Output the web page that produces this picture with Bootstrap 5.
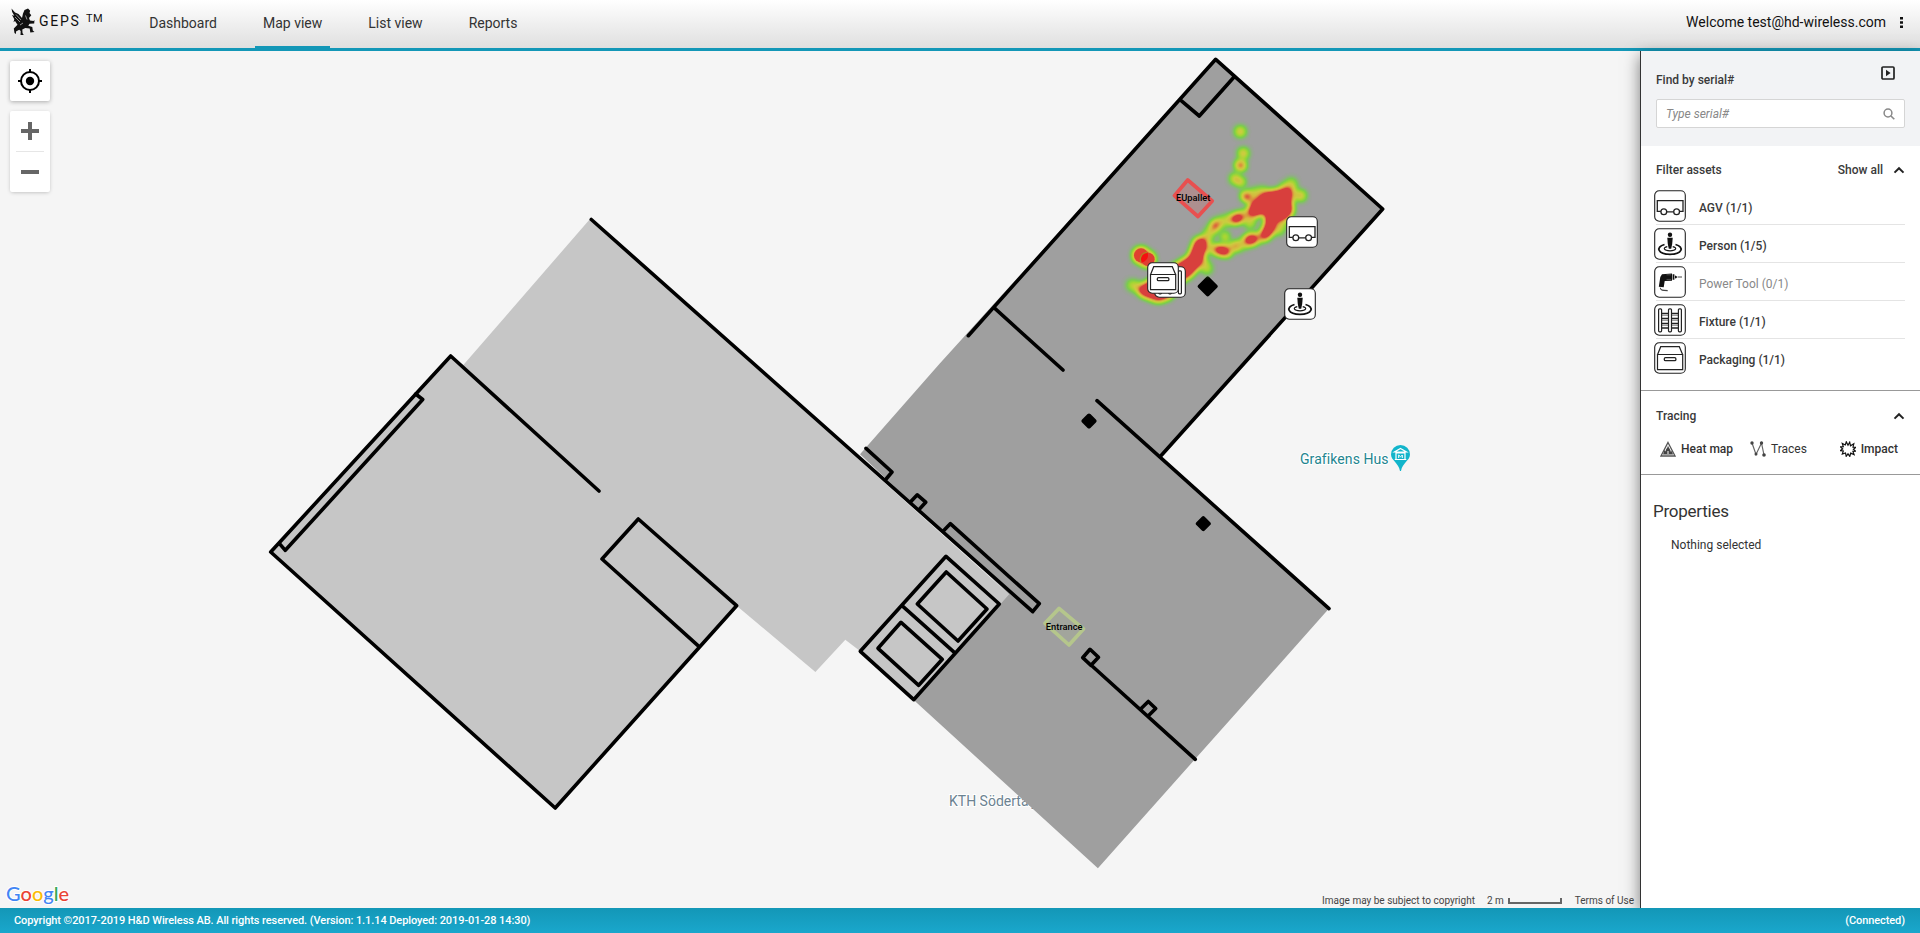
<!DOCTYPE html>
<html lang="en">
<head>
<meta charset="utf-8">
<meta name="viewport" content="width=device-width, initial-scale=1">
<title>GEPS - Map view</title>
<link href="https://cdn.jsdelivr.net/npm/bootstrap@5.3.0/dist/css/bootstrap.min.css" rel="stylesheet">
<style>
body{font-family:Roboto,sans-serif;font-size:12px;line-height:16px;color:#333;height:100vh;overflow:hidden}
.topbar{height:51px;background:linear-gradient(#fff,#dfdfdf);border-bottom:3px solid #1397b7;padding-left:11px;padding-right:13px}
.brand-text{font-size:14px;letter-spacing:1.75px;color:#111;margin-left:4px;padding-bottom:7px}
.brand-text sup{font-size:11px;letter-spacing:.6px;top:-4px;margin-left:0;line-height:0}
.topbar .nav-link{font-size:14px;color:#333;padding:0 8px;height:48px;line-height:47px;border-bottom:2px solid transparent}
.topbar .nav-link.active{border-color:#1397b7}
.main-tabs{margin-left:38px;gap:30px}
.welcome{font-size:14px;color:#111;line-height:44px}
.map-area{background:#f5f5f5;min-width:0}
.map-tools{left:10px;top:10px;width:40px;gap:10px}
.tool-btn{background:#fff;border-radius:2px;box-shadow:0 1px 4px rgba(0,0,0,.3);height:40px}
.tool-zoom{background:#fff;border-radius:2px;box-shadow:0 1px 4px -1px rgba(0,0,0,.3);height:81px}
.tool-zoom hr{width:28px;margin:0;opacity:1;border-color:#e6e6e6}
.map-note{right:6px;bottom:0;font-size:10px;line-height:14px;color:#444}
.scale-bar{width:54px;height:6px;border:2px solid #666;border-top:0;margin:0 13px 0 4px}
.side{width:280px;background:#fff;border-left:1px solid #333;box-shadow:0 5px 15px rgba(0,0,0,.5)}
.side-title{font-weight:500;font-size:12px;color:#3a3a3a}
.find-box{background:#f2f3f5;height:95px;padding:15px 15px 0 15px}
.find-input{height:29px;border:1px solid #d5d5d5;border-radius:2px;background:#fff;font-style:italic;color:#888;padding:0 9px 0 9px}
.filter-box{height:245px;border-bottom:1px solid #999;padding:16px 15px 0 13px}
.asset-row{height:38px}
.asset-label{border-bottom:1px solid #e4e4e4;margin-left:-30px;padding-left:43px;height:35px;line-height:37px;font-weight:500;color:#3a3a3a}
.asset-row:last-child .asset-label{border-color:transparent}
.asset-label.off{font-weight:400;color:#888}
.trace-box{height:84px;border-bottom:1px solid #999;padding:17px 15px 0}
.trace-item{font-weight:500;gap:5px}
.props{padding:26px 12px}
.props h2{font-size:17px;line-height:20px;font-weight:400;color:#333;margin:0;letter-spacing:-.25px}
.foot{height:25px;background:linear-gradient(#1397b7,#1aa7cc);color:#fff;font-size:11px;padding:1px 15px 0 14px;font-weight:500;letter-spacing:-.08px;z-index:2}
</style>
</head>
<body class="d-flex flex-column">

<svg width="0" height="0" class="position-absolute" aria-hidden="true">
  <defs>
    <g id="ic-frame"><rect x=".7" y=".7" width="30.6" height="30.6" rx="4.5" fill="#fff" stroke="#222" stroke-width="1.1"/></g>
    <symbol id="ic-agv" viewBox="0 0 32 32"><use href="#ic-frame"/><g fill="none" stroke="#222" stroke-width="1.3"><path d="M6.8 21.3H3.3V10.7H29v10.6h-3.2M12.8 21.8h6.6"/><circle cx="9.8" cy="21.8" r="2.9"/><circle cx="22.6" cy="21.8" r="2.9"/></g></symbol>
    <symbol id="ic-person" viewBox="0 0 32 32"><use href="#ic-frame"/><circle cx="16" cy="6.7" r="2.2" fill="#111"/><path d="M13.3 9.8h5.4l-.5 6.2-1 4.8h-2.4l-1-4.8z" fill="#111"/><g fill="none" stroke="#111"><path d="M13.3 18.6c-5 1-3.500 4.200 2.700 4.200s7.700-3.200 2.700-4.200" stroke-width="1.200"/><path d="M10.500 16.500C1 19 4 26.300 16 26.300s15-7.300 5.500-9.800" stroke-width="1.700"/></g></symbol>
    <symbol id="ic-drill" viewBox="0 0 32 32"><use href="#ic-frame"/><path d="M8 8.200 18 7.500v7.200l-7.300.4-1 6.200-4.900-.6L6.300 11z" fill="#111"/><path d="M12.500 8.800h4.500M12.500 13.400h4.500" stroke="#777" stroke-width=".6"/><path d="M18.600 8.300h1.800v5.500h-1.800zM21 9.600l1.800.7v1.600l-1.800.6z" fill="#111"/><path d="M23.500 11h4.500" stroke="#444"/><path d="M6.300 21.800c.2 2.600 2.200 2.700 7.400 2.800" fill="none" stroke="#444" stroke-width="1.100"/></symbol>
    <symbol id="ic-fixture" viewBox="0 0 32 32"><use href="#ic-frame"/><path d="M6 9.500h20M6 14.500h20M6 19.500h20M6 24h20" stroke="#222" stroke-width="1.300"/><path d="M6 11.300h20M6 16.300h20M6 21.300h20" stroke="#888" stroke-width="1"/><g fill="#fff" stroke="#222" stroke-width="1.200"><rect x="4.600" y="4.800" width="3" height="23" rx="1"/><rect x="14.500" y="4.800" width="3" height="23" rx="1"/><rect x="24.400" y="4.800" width="3" height="23" rx="1"/></g></symbol>
    <symbol id="ic-pack" viewBox="0 0 32 32"><use href="#ic-frame"/><g fill="none" stroke="#222" stroke-width="1.200"><path d="M3.500 12.500h25.200v15.200H3.500z"/><path d="M3.700 12.300 6.700 4.700h18.600l3.200 7.600"/><rect x="10.300" y="15.700" width="11.600" height="3" rx="1.200" stroke-width="1.300"/></g></symbol>
    <symbol id="ic-chevron" viewBox="0 0 12 8"><path d="M1.500 6.600 6 2.200l4.500 4.400" fill="none" stroke="#222" stroke-width="2"/></symbol>
    <filter id="heat" x="0" y="0" width="780" height="690" filterUnits="userSpaceOnUse" color-interpolation-filters="sRGB">
      <feGaussianBlur stdDeviation="10" result="b"/>
      <feColorMatrix in="b" values="0 0 0 1 0  0 0 0 1 0  0 0 0 1 0  0 0 0 0 1"/>
      <feComponentTransfer result="c"><feFuncR type="table" tableValues=".38 .44 .64 .80 .84 .86 .85 .85 .85 .85 .85"/><feFuncG type="table" tableValues=".88 .86 .84 .80 .72 .52 .25 .25 .25 .25 .25"/><feFuncB type="table" tableValues=".2 .2 .2 .25 .25 .24 .24 .24 .24 .24 .24"/></feComponentTransfer>
      <feComponentTransfer in="b" result="a"><feFuncA type="table" tableValues="0 .75 1 1 1 1 1 1 1 1 1"/></feComponentTransfer>
      <feComposite in="c" in2="a" operator="in"/>
    </filter>
  </defs>
</svg>

<header class="topbar d-flex flex-shrink-0">
  <a class="d-flex align-items-center text-decoration-none" href="#">
    <svg width="24" height="28" viewBox="0 0 24 28" style="margin-bottom:6px"><path d="M.5 1.500 4 5.500 7.500 7 11 11l1-4.500L13.500 3 17 1.500l2.200 2.200-.7 2.300 1.800 2.300L18 11l1 2.500 3.500.5L23.500 13l-.3 3.500-4.700.3-1.200 2 4 1.200.5 3.500 1.700 1.500-4.200.6-.6-4-4.400-.6-3 1.500.2 3.500 1.500 2.500H9.500l.2-4.500-1.500-1.300-3.200 1.800v2.500L3.500 26l-.7-4.500 3.700-3.700L4 14l-1.500 1.200.8-3L1 8l2.300.8L1.200 5z" fill="#111"/><path d="m5 7.500 5 5.500M4 10l5 5M14.500 8.500l1.500 4M9 18l3-2" stroke="#ccc" stroke-width=".7"/></svg>
    <span class="brand-text">GEPS <sup>TM</sup></span>
  </a>
  <nav class="nav main-tabs">
    <a class="nav-link" href="#">Dashboard</a>
    <a class="nav-link active" href="#">Map view</a>
    <a class="nav-link" href="#">List view</a>
    <a class="nav-link" href="#">Reports</a>
  </nav>
  <div class="welcome ms-auto d-flex align-items-start">Welcome test@hd-wireless.com
    <svg width="11" height="44" viewBox="0 0 11 44" style="margin-left:10px"><path d="M4 17h3v2.600H4zM4 21.200h3v2.600H4zM4 25.400h3V28H4z" fill="#111"/></svg>
  </div>
</header>

<main class="d-flex flex-grow-1" style="min-height:0">
  <section class="map-area position-relative flex-grow-1 overflow-hidden">
    <svg width="1640" height="857" viewBox="0 51 1640 857" class="d-block">
      <g font-family="Roboto, sans-serif" font-size="14" paint-order="stroke" stroke="#fff" stroke-width="2">
        <text x="949" y="806" fill="#6b8291">KTH Södertälje</text>
        <text x="1300" y="464" fill="#23858f" letter-spacing=".08">Grafikens Hus</text>
      </g>
      <path d="M1400.500 445a9.500 9.500 0 0 0-9.500 9.500c0 6 7.500 8 9 16.500h1c1.500-8.500 9-10.500 9-16.500a9.500 9.500 0 0 0-9.500-9.500z" fill="#12b5cb"/>
      <path d="m1400.500 448.500 6 3.500h-12zM1396 453h9v6.500h-9zM1394.800 459.500h11.500" fill="none" stroke="#fff" stroke-width="1.200"/><path d="M1398.700 458v-3l1.800 1.800 1.800-1.800v3" fill="none" stroke="#fff"/>

      <!-- floor areas -->
      <path d="M450.700 356 463.300 365 590 219 1009 594.300 913.700 699.700 860.300 651.300 845.300 639.700 815.400 672 736.600 605.700 555.200 808 270.700 552z" fill="#c6c6c6"/>
      <path d="M1215.700 59.300 1382.700 209 1160.300 456.800 1329 608.600 1097.900 868.300 913.700 700 1009 594.300 860 454.300 940 363.300z" fill="#9f9f9f"/>

      <!-- walls -->
      <g fill="none" stroke="#000" stroke-width="3.600" stroke-linecap="round" stroke-linejoin="round">
        <path d="M599 491 450.700 356 270.700 552 555.200 808 736.600 605.700 638.300 519 602 559 699.100 646.700"/>
        <path d="M415.700 394l7 5.500L285.300 550.300l-5.600-6.500"/>
        <path d="M591.300 219.500 1032.700 611.700l6.600-8-89-80-7 7.300"/>
        <path d="M866 448.300 892 472l-6.300 7.500M910.900 501.500l6.400-6.700 8.400 7.400-6.700 7.400"/>
        <path d="M946 556.300 999.300 604 913.700 699.700 860.300 651.300zM902 605.700 954.300 652.300M946.300 572 987 609 958 641 917.300 604zM901 622.300 942.300 659.300 918.700 685.300 878 648.300z"/>
        <path d="M968.300 335.700 1215.700 59.300 1382.700 209 1160.300 456.500M1097 400.700 1329 608.600M994 307.700 1063 370M1180 99.700l19.300 16.300 35-39.300"/>
        <path d="M1090 649.300l8.500 8-7.500 8-8.300-7.600zM1091 665l104.300 94.300M1140.900 708.700l7.400-7.200 7.400 7-7.300 7.300"/>
      </g>
      <g stroke="#000" stroke-width="4" stroke-linejoin="round"><path d="M1207.700 278.300l8 8-8 8-8-8zM1089 415.500l5.500 5.500-5.500 5.500-5.500-5.500zM1203.300 518.200l5.500 5.500-5.500 5.500-5.500-5.500z"/></g>

      <!-- heat map -->
      <g transform="translate(1090 100) scale(.33333)">
        <g filter="url(#heat)">
          <path d="M474 345 484 308 530 277 590 266 603 262 602 300 608 332 594 354 560 362 546 402 525 420 510 410 528 370 526 338 496 348z"/>
          <path d="M318 418 346 414 346 450 330 495 300 528 270 545 240 592 205 604 154 585 144 566 170 548 250 500 298 470z"/>
          <ellipse cx="442" cy="356" rx="20" ry="12" transform="rotate(-20 442 356)"/>
          <ellipse cx="377" cy="377" rx="14" ry="7" transform="rotate(-50 377 377)"/>
          <ellipse cx="469" cy="291" rx="15" ry="9" transform="rotate(40 469 291)"/>
          <ellipse cx="483" cy="418" rx="20" ry="14" transform="rotate(-15 483 418)"/>
          <ellipse cx="397" cy="453" rx="25" ry="12" transform="rotate(15 397 453)"/>
          <circle cx="437" cy="438" r="7"/>
          <g fill="none" stroke="#000" stroke-width="26" stroke-linecap="round" opacity=".34"><path d="M345 420 378 372 440 352 492 335M345 440 385 450 437 440 515 410M126 555l36 15M565 390l10-20M480 345v25M335 480l16 26M480 284l40-8M604 250v40M585 262h20"/></g>
          <g opacity=".52"><circle cx="451" cy="95" r="13"/><circle cx="460" cy="160" r="13"/><circle cx="435" cy="236" r="12"/><circle cx="452" cy="246" r="11"/><circle cx="632" cy="287" r="13"/><circle cx="405" cy="410" r="10"/></g>
          <circle cx="452" cy="196" r="13" opacity=".8"/>
          <circle cx="153" cy="466" r="21"/><circle cx="172" cy="478" r="20"/>
        </g>
        <circle cx="174" cy="478" r="20" fill="#df3d33"/><circle cx="153" cy="466" r="21" fill="#e04030"/>
        <path d="M172 457a21 21 0 0 0-19 30 21 21 0 0 0 19-30z" fill="#f51010"/><path d="M172 457a21 21 0 0 0-19 30" fill="none" stroke="#b08020" stroke-width="4"/>
      </g>

      <!-- zones -->
      <path d="M1187.700 180 1212.200 201 1198 216.500 1174.400 195.700z" fill="#e85050" fill-opacity=".2" stroke="#e85050" stroke-width="3.700" stroke-linejoin="round"/>
      <path d="M1059 608.400 1083.500 629 1069 645 1045 623.300z" fill="#b5c68c" fill-opacity=".15" stroke="#b5c68c" stroke-width="3.700" stroke-linejoin="round"/>
      <g font-family="Roboto, sans-serif" font-size="9.300" font-weight="500" text-anchor="middle" fill="#000"><text x="1193.200" y="200.700">EUpallet</text><text x="1064.200" y="630">Entrance</text></g>

      <!-- asset pins -->
      <use href="#ic-agv" x="1286" y="216" width="32" height="32"/>
      <use href="#ic-person" x="1284" y="288" width="32" height="32"/>
      <use href="#ic-fixture" x="1154" y="266" width="32" height="32"/>
      <use href="#ic-pack" x="1147" y="262" width="32" height="32"/>

      <text x="6" y="901" font-family="Lato, sans-serif" font-size="20" font-weight="500" paint-order="stroke" stroke="#fff" stroke-width="2"><tspan fill="#4285f4">G</tspan><tspan fill="#ea4335">o</tspan><tspan fill="#fbbc05">o</tspan><tspan fill="#4285f4">g</tspan><tspan fill="#34a853">l</tspan><tspan fill="#ea4335">e</tspan></text>
    </svg>

    <div class="map-tools position-absolute d-flex flex-column">
      <div class="tool-btn d-flex align-items-center justify-content-center"><svg width="24" height="24" viewBox="0 0 24 24"><circle cx="12" cy="12" r="9" fill="none" stroke="#000" stroke-width="2"/><circle cx="12" cy="12" r="4.200"/><path d="M12 0v4M12 20v4M0 12h4M20 12h4" stroke="#000" stroke-width="2"/></svg></div>
      <div class="tool-zoom d-flex flex-column align-items-center">
        <svg width="40" height="40" viewBox="0 0 40 40"><path d="M11 20h18M20 11v18" stroke="#666" stroke-width="4"/></svg>
        <hr>
        <svg width="40" height="40" viewBox="0 0 40 40"><path d="M11 20h18" stroke="#666" stroke-width="4"/></svg>
      </div>
    </div>
    <div class="map-note position-absolute d-flex align-items-center"><span style="margin-right:12px">Image may be subject to copyright</span><span>2 m</span><span class="scale-bar"></span><span>Terms of Use</span></div>
  </section>

  <aside class="side flex-shrink-0 position-relative">
    <div class="find-box">
      <div class="d-flex justify-content-between mb-2" style="height:25px">
        <span class="side-title" style="padding-top:6px">Find by serial#</span>
        <svg width="14" height="14" viewBox="0 0 14 14" style="margin-right:10px"><rect x="1" y="1" width="12" height="12" rx="1" fill="none" stroke="#222" stroke-width="1.700"/><path d="M5 3.800v6.400L9.600 7z" fill="#222"/></svg>
      </div>
      <div class="find-input d-flex align-items-center justify-content-between"><span>Type serial#</span><svg width="12" height="12" viewBox="0 0 12 12"><circle cx="5" cy="5" r="3.900" fill="none" stroke="#888" stroke-width="1.500"/><path d="m8 8 3.300 3.300" stroke="#888" stroke-width="1.600"/></svg></div>
    </div>

    <div class="filter-box">
      <div class="side-title d-flex align-items-center mb-2 pb-1 ps-0"><span class="me-auto" style="margin-left:2px">Filter assets</span><span>Show all</span><svg width="12" height="8" style="margin-left:10px"><use href="#ic-chevron"/></svg></div>
      <div class="asset-row d-flex"><svg width="32" height="32" class="flex-shrink-0 position-relative z-1"><use href="#ic-agv"/></svg><div class="asset-label flex-grow-1">AGV (1/1)</div></div>
      <div class="asset-row d-flex"><svg width="32" height="32" class="flex-shrink-0 position-relative z-1"><use href="#ic-person"/></svg><div class="asset-label flex-grow-1">Person (1/5)</div></div>
      <div class="asset-row d-flex"><svg width="32" height="32" class="flex-shrink-0 position-relative z-1"><use href="#ic-drill"/></svg><div class="asset-label off flex-grow-1">Power Tool (0/1)</div></div>
      <div class="asset-row d-flex"><svg width="32" height="32" class="flex-shrink-0 position-relative z-1"><use href="#ic-fixture"/></svg><div class="asset-label flex-grow-1">Fixture (1/1)</div></div>
      <div class="asset-row d-flex"><svg width="32" height="32" class="flex-shrink-0 position-relative z-1"><use href="#ic-pack"/></svg><div class="asset-label flex-grow-1">Packaging (1/1)</div></div>
    </div>

    <div class="trace-box">
      <div class="side-title d-flex align-items-center justify-content-between"><span>Tracing</span><svg width="12" height="8"><use href="#ic-chevron"/></svg></div>
      <div class="d-flex justify-content-between" style="margin:17px 7px 0 4px">
        <div class="trace-item d-flex"><svg width="16" height="16" viewBox="0 0 16 16"><path d="M8 1.500 15 15H1z" fill="#fff" stroke="#555" stroke-width="1.300"/><path d="M8 4.500c.3 2 2.800 4 2.800 6.300L12 10l1 3.500H3L4.500 9l1 1.500C5.500 8 7.800 7 8 4.500z" fill="#444"/><path d="M8 10v3" stroke="#fff"/></svg>Heat map</div>
        <div class="trace-item d-flex fw-normal" style="margin-right:16px"><svg width="16" height="16" viewBox="0 0 16 16"><path d="M2 2v0l4 11.500L11.500 2 14 14" fill="none" stroke="#666" stroke-width="1.200"/><g fill="#444"><circle cx="2" cy="2" r="1.700"/><circle cx="6" cy="13" r="1.500"/><circle cx="11.500" cy="2" r="1.700"/><circle cx="14" cy="14" r="1.800"/></g></svg>Traces</div>
        <div class="trace-item d-flex"><svg width="16" height="16" viewBox="0 0 16 16"><path d="m8 4.200 1.700-3 .8 3.600 3.300-2-.8 3.400 2.700.2-2.300 1.800 2.300 2-2.800.2 1.200 3.200-3.400-1.500-.9 3.300L8 12.800l-1.800 2.500-.7-3.300-3.200 1 1-3-3-.4L2.700 8 .3 5.800l3-.1-1-3.200 3 1.500L6.300.8z" fill="none" stroke="#111" stroke-width="1.200"/></svg>Impact</div>
      </div>
    </div>

    <div class="props">
      <h2>Properties</h2>
      <div style="margin:16px 0 0 18px">Nothing selected</div>
    </div>
  </aside>
</main>

<footer class="foot position-relative d-flex align-items-center justify-content-between flex-shrink-0"><span>Copyright ©2017-2019 H&amp;D Wireless AB. All rights reserved. (Version: 1.1.14 Deployed: 2019-01-28 14:30)</span><span>(Connected)</span></footer>

<script src="https://cdn.jsdelivr.net/npm/bootstrap@5.3.0/dist/js/bootstrap.bundle.min.js"></script>
</body>
</html>
